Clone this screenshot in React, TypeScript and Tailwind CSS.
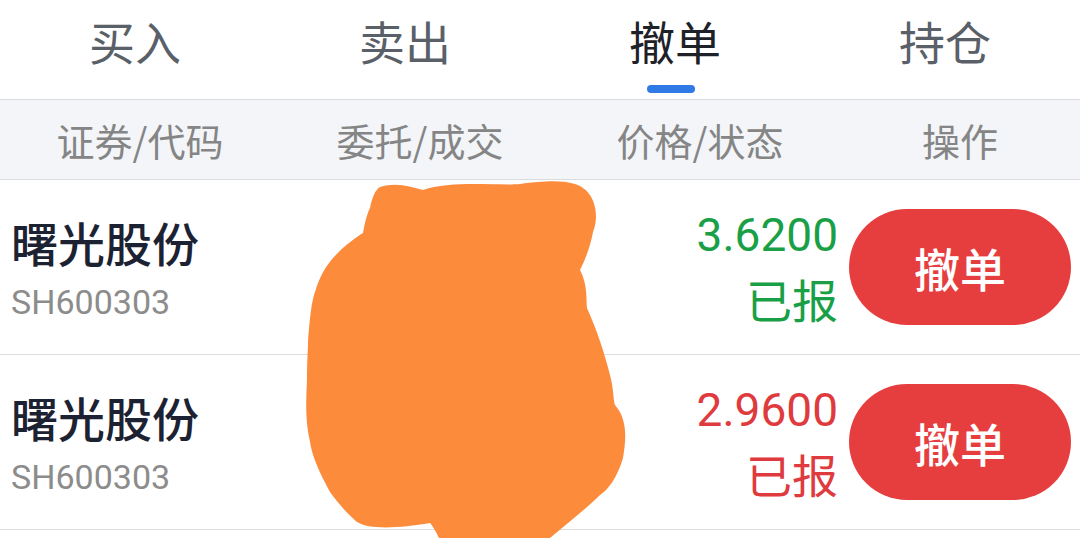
import React from 'react';

interface Order {
    name: string;
    code: string;
    price: string;
    status: string;
    up: boolean;
}

const orders: Order[] = [
    { name: '曙光股份', code: 'SH600303', price: '3.6200', status: '已报', up: false },
    { name: '曙光股份', code: 'SH600303', price: '2.9600', status: '已报', up: true },
];

const tabs = ['买入', '卖出', '撤单', '持仓'];

const cjk = "font-['Noto_Sans_CJK_SC',sans-serif]";
const num = "font-['Roboto','Noto_Sans_CJK_SC',sans-serif]";

export default function App() {
    return (
        <div className={`relative w-[1080px] h-[538px] overflow-hidden bg-white ${cjk}`}>
            {/* Tabs */}
            <div className="grid grid-cols-4 h-[99px]">
                {tabs.map((tab, i) => (
                    <div key={tab} className="relative flex justify-center pt-[10px]">
                        <span
                            className={`text-[46px] leading-[60px] ${
                                i === 2 ? 'text-[#1e2228]' : 'text-[#5a6068]'
                            }`}
                        >
                            {tab}
                        </span>
                        {i === 2 && (
                            <div className="absolute left-[107px] top-[85px] w-[48px] h-[8px] rounded-full bg-[#2f7ae5]" />
                        )}
                    </div>
                ))}
            </div>

            {/* Column header */}
            <div className="flex h-[81px] items-center bg-[#f3f5f8] border-y border-[#d9dce1] text-[38px] text-[#858585]">
                <div className="w-[280px] text-center">证券/代码</div>
                <div className="w-[280px] text-center">委托/成交</div>
                <div className="w-[280px] text-center">价格/状态</div>
                <div className="w-[240px] text-center">操作</div>
            </div>

            {/* Orders */}
            {orders.map((o, i) => (
                <div key={i} className="flex items-center h-[175px] border-b border-[#dddddd]">
                    <div className="w-[280px] pl-[11px]">
                        <div className="text-[47px] leading-[62px] font-medium text-[#1c2232]">{o.name}</div>
                        <div className={`${num} mt-[8px] text-[34px] leading-[42px] text-[#8c8c8c]`}>
                            {o.code}
                        </div>
                    </div>
                    <div className="flex-1" />
                    <div
                        className={`flex flex-col items-end ${
                            o.up ? 'text-[#df3b3e]' : 'text-[#19a046]'
                        }`}
                    >
                        <div className={`${num} text-[46px] leading-[60px] pt-[2px]`}>{o.price}</div>
                        <div className="text-[46px] leading-[66px]">{o.status}</div>
                    </div>
                    <button className="ml-[11px] mr-[9px] w-[222px] h-[116px] rounded-full bg-[#e63e3f] text-white text-[46px] font-medium">
                        撤单
                    </button>
                </div>
            ))}

            {/* redaction scribble */}
            <svg
                className="absolute left-0 top-0 pointer-events-none"
                width="1080"
                height="538"
                viewBox="0 0 1080 538"
            >
                <path
                    d="M380 187 C395 182 410 186 423 190 C450 180 500 186 520 184 C545 181 560 180 575 184 C595 190 600 215 593 232 C590 248 585 260 580 270 C588 285 586 300 587 308 C597 330 605 355 610 375 C614 390 613 400 615 405 C628 420 626 440 623 458 C617 478 608 490 600 495 C585 510 565 525 550 538 L440 540 C436 532 433 526 430 523 C400 528 370 530 357 522 C345 512 336 500 330 492 C318 470 312 455 310 442 C305 420 306 400 307 380 C307 360 308 350 308 342 C310 315 312 300 315 292 C320 275 327 265 333 258 C345 245 355 238 363 233 C365 222 367 214 370 208 C372 198 375 190 380 187 Z"
                    fill="#fc8c3b"
                />
            </svg>
        </div>
    );
}
